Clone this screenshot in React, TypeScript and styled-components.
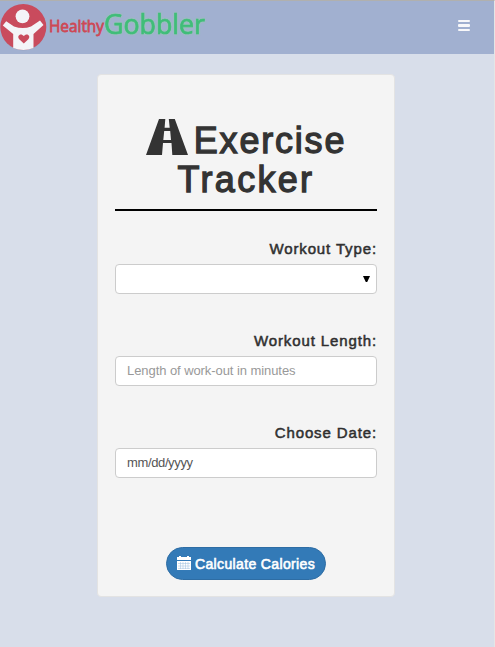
import React from "react";
import styled, { createGlobalStyle } from "styled-components";

const GlobalStyle = createGlobalStyle`
  *, *::before, *::after { box-sizing: border-box; }
  body {
    margin: 0;
    background: #d8deea;
    color: #333;
    font-family: "Liberation Sans", Arial, sans-serif;
  }
`;

const Page = styled.div`
  min-height: 647px;
  border-top: 1px solid #b0b0ae;
  border-right: 1px solid #e4e6e6;
  background: #d8deea;
`;

const Navbar = styled.header`
  display: flex;
  justify-content: space-between;
  height: 53px;
  background: #a1b0d0;
`;

const Logo = styled.svg`
  display: block;
  width: 215px;
  height: 53px;
`;

const GreenWord = styled.text`
  fill: #40bd79;
  stroke: #40bd79;
  stroke-width: 0.7px;
  font-family: "Open Sans", sans-serif;
  font-size: 28px;
  filter: drop-shadow(0 0 1px #93cfa5);
`;

const MenuButton = styled.button`
  display: flex;
  flex-direction: column;
  gap: 2px;
  width: 12px;
  height: 11px;
  margin: 19px 24px 0 0;
  padding: 0;
  border: 0;
  background: none;
`;

const MenuBar = styled.span`
  width: 12px;
  height: 2.4px;
  flex: none;
  border-radius: 1px;
  background: #f8f8fa;
`;

const Card = styled.main`
  width: 298px;
  height: 523px;
  margin: 20px 0 0 97px;
  padding: 44px 17px 0;
  border: 1px solid #e3e3e3;
  border-radius: 4px;
  background: #f4f4f4;
`;

const Title = styled.h1`
  height: 92px;
  margin: 0;
  border-bottom: 2px solid #000;
  font-size: 36px;
  font-weight: 400;
  line-height: 39px;
  text-align: center;
  -webkit-text-stroke: 1.3px #333;
`;

const TitleLine = styled.span<{ $tracking: number }>`
  display: flex;
  justify-content: center;
  gap: 6px;
  height: 39px;
  padding-top: 2px;
  letter-spacing: ${(p) => p.$tracking}px;
`;

const RoadIcon = styled.svg`
  flex: none;
  width: 42px;
  height: 36px;
  margin-top: -2px;
`;

const Field = styled.div`
  height: 92px;
  padding-top: 27px;
`;

const Label = styled.label`
  display: block;
  height: 26px;
  font-size: 15px;
  line-height: 22px;
  letter-spacing: 0.88px;
  text-align: right;
  -webkit-text-stroke: 0.5px #2b2b2b;
`;

const Control = styled.div<{ $placeholder?: boolean }>`
  display: flex;
  align-items: center;
  height: 30px;
  padding: 0 6px 2px 11px;
  border: 1px solid #ccc;
  border-radius: 4px;
  background: #fff;
  color: ${(p) => (p.$placeholder ? "#999" : "#555")};
  font-size: 13px;
  letter-spacing: ${(p) => (p.$placeholder ? "-0.07px" : "-0.37px")};
`;

const Arrow = styled.svg`
  width: 7px;
  height: 6px;
  margin: 1px 0 0 auto;
`;

const SubmitButton = styled.button`
  display: flex;
  align-items: center;
  gap: 4px;
  width: 160px;
  height: 33px;
  margin: 60px auto 0;
  padding: 0 0 0 10px;
  border: 1px solid #2e6da4;
  border-radius: 17px;
  background: #337ab7;
  color: #fff;
  font: 400 14px "Liberation Sans", Arial, sans-serif;
  letter-spacing: 0.36px;
  white-space: nowrap;
  -webkit-text-stroke: 0.6px #fff;
`;

const ButtonText = styled.span`
  padding-top: 1px;
`;

const CalendarIcon = styled.svg`
  flex: none;
  width: 14px;
  height: 14px;
  margin-top: -1px;
`;

function BrandLogo() {
  return (
    <Logo viewBox="0 1 215 53" role="img" aria-label="Healthy Gobbler">
      <circle cx="23.3" cy="28" r="22.5" fill="#929bb5" opacity=".6" />
      <circle cx="23.3" cy="27" r="23" fill="#c94b5d" />
      <circle cx="22.5" cy="16.3" r="6.9" fill="#f4f4f8" />
      <path d="M2.8 25.5 6.2 21.2 14 26.4Q23 29.5 31 26.4L40 20.6 43.5 25 33.5 34V48Q23.5 52 13.2 48V34Z" fill="#f4f4f8" />
      <path d="M23.8 43.6 19.5 39.4C16 35.7 21 32.2 23.8 36.1 26.6 32.2 31.6 35.7 28.1 39.4Z" fill="#c94b5d" />
      <text x="49" y="32" fill="#ce4855" stroke="#ce4855" strokeWidth=".8" fontFamily="Open Sans, sans-serif" fontSize="17" textLength="55" lengthAdjust="spacingAndGlyphs">Healthy</text>
      <GreenWord x="104" y="34.3" textLength="101" lengthAdjust="spacingAndGlyphs">Gobbler</GreenWord>
    </Logo>
  );
}

export default function App() {
  return (
    <>
      <GlobalStyle />
      <Page>
        <Navbar>
          <BrandLogo />
          <MenuButton aria-label="Open menu"><MenuBar /><MenuBar /><MenuBar /></MenuButton>
        </Navbar>
        <Card>
          <Title>
            <TitleLine $tracking={1.8}>
              <RoadIcon viewBox="0 0 42 36" aria-hidden="true">
                <path fill="#333" fillRule="evenodd" d="M13 0H19.3L18.6 8.7H23.7L22.8 0H28.8L42 36H26.3L25.5 24H17L16 36H0ZM18.2 12 17.3 21H25L24.2 12Z" />
              </RoadIcon>
              <span>Exercise</span>
            </TitleLine>
            <TitleLine $tracking={2.3}>Tracker</TitleLine>
          </Title>
          <Field>
            <Label>Workout Type:</Label>
            <Control>
              <Arrow viewBox="0 0 7 6" aria-hidden="true"><path d="M0 0H7L4.2 6H2.8Z" /></Arrow>
            </Control>
          </Field>
          <Field>
            <Label>Workout Length:</Label>
            <Control $placeholder>Length of work-out in minutes</Control>
          </Field>
          <Field>
            <Label>Choose Date:</Label>
            <Control>mm/dd/yyyy</Control>
          </Field>
          <SubmitButton>
            <CalendarIcon viewBox="0 0 14 14" aria-hidden="true">
              <path fill="#fff" d="M0 1H2V0H4V1H10V0H12V1H14V4H0ZM0 5H14V14H0Z" />
              <path fill="none" stroke="#9abfde" strokeWidth=".5" d="M1 7.5H13M1 10H13M1 12.4H13M3.5 6V13M6 6V13M8.5 6V13M11 6V13" />
            </CalendarIcon>
            <ButtonText>Calculate Calories</ButtonText>
          </SubmitButton>
        </Card>
      </Page>
    </>
  );
}
